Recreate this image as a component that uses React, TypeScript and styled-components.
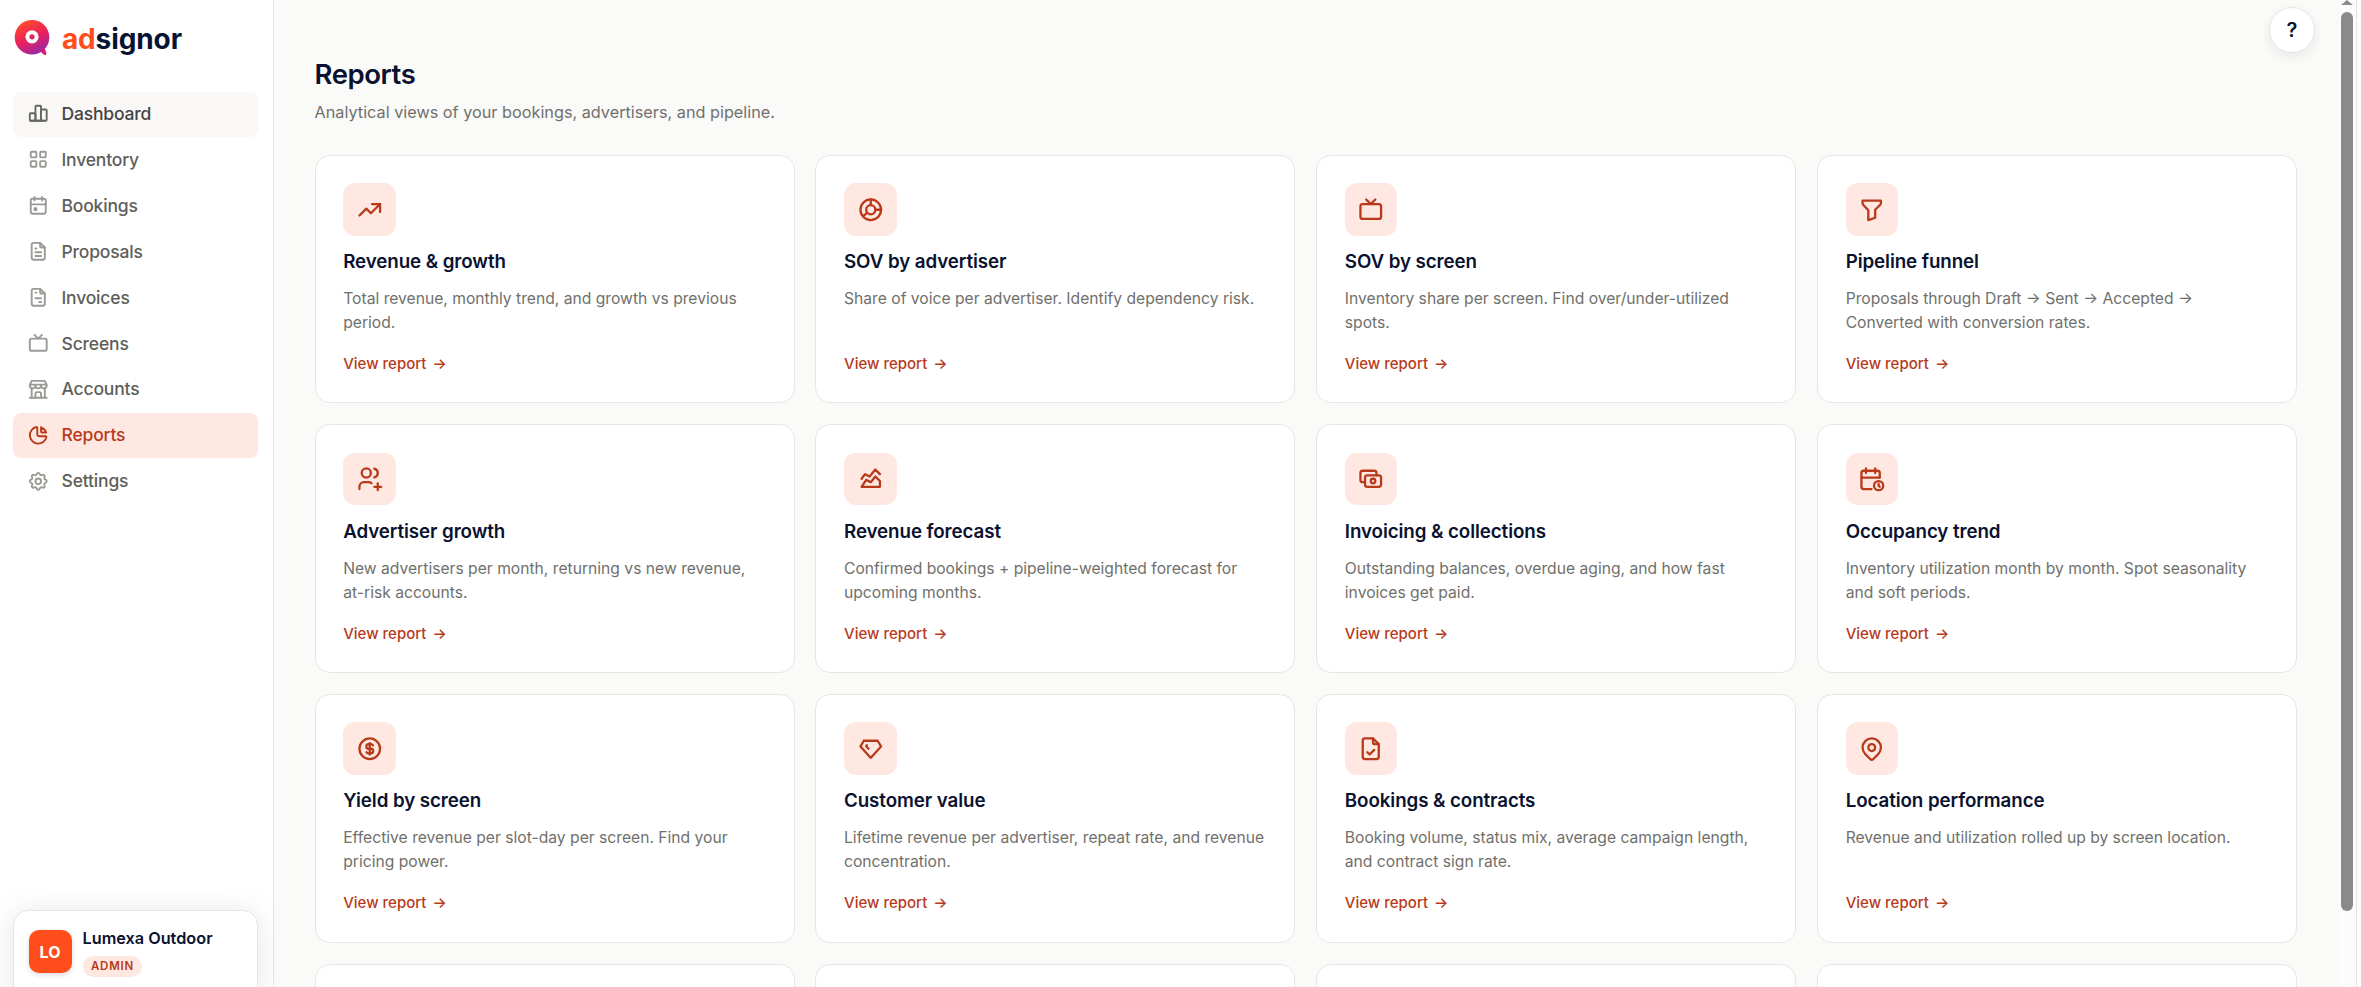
import React from 'react';
import styled, { createGlobalStyle, css } from 'styled-components';
import type { IconType } from 'react-icons';
import {
  TbBuildingStore, TbCalendarEvent, TbCalendarTime, TbCash, TbChartAreaLine, TbChartBar,
  TbChartDonut3, TbChartPie, TbCoin, TbDeviceTv, TbDiamond, TbFileCheck, TbFileInvoice,
  TbFileText, TbFilter, TbLayoutGrid, TbMapPin, TbSettings, TbTrendingUp, TbUsersPlus,
} from 'react-icons/tb';

const color = {
  ink: '#0a1230',
  muted: '#70706c',
  brand: '#ff4d1c',
  accent: '#b83a1b',
  tint: '#ffe8e1',
  line: '#e7e6e3',
  canvas: '#fafaf8',
};

const GlobalStyle = createGlobalStyle`
  *, *::before, *::after { box-sizing: border-box; }
  body {
    margin: 0;
    overflow: hidden;
    background: ${color.canvas};
    font-family: Inter, "Liberation Sans", sans-serif;
    color: ${color.ink};
  }
`;

const Shell = styled.div`
  display: flex;
  height: 987px;
  overflow: hidden;
`;

const Sidebar = styled.aside`
  display: flex;
  flex-direction: column;
  flex: none;
  width: 274px;
  padding: 0 15px 0 12.5px;
  background: #fff;
  border-right: 1px solid #e3e3e0;
  overflow: hidden;
`;

const Brand = styled.div`
  display: flex;
  align-items: center;
  gap: 11.4px;
  height: 77px;
  margin-bottom: 15px;
`;

const Wordmark = styled.span`
  font-size: 28px;
  font-weight: 700;
  line-height: 34px;
  letter-spacing: -0.1px;
  color: #071433;
  b { font-weight: 700; color: ${color.brand}; }
`;

const Nav = styled.nav`
  display: flex;
  flex-direction: column;
  gap: 0.92px;
`;

const NavItem = styled.a<{ $state?: 'hover' | 'active' }>`
  display: flex;
  align-items: center;
  gap: 12px;
  height: 45px;
  padding: 0 14.5px 2px;
  border-radius: 8px;
  font-size: 17.5px;
  font-weight: 500;
  letter-spacing: -0.01em;
  color: #5e5e5a;
  svg { flex: none; color: #999995; }
  ${({ $state }) => $state === 'hover' && css`
    background: #f9f8f6;
    color: #454544;
    svg { color: #666664; }
  `}
  ${({ $state }) => $state === 'active' && css`
    background: ${color.tint};
    color: ${color.accent};
    svg { color: ${color.accent}; }
  `}
`;

const Account = styled.div`
  display: flex;
  gap: 11px;
  flex: none;
  height: 92px;
  margin-top: auto;
  margin-bottom: -15px;
  padding: 19px 15px;
  background: #fff;
  border: 1px solid #e5e5e3;
  border-radius: 15px;
  box-shadow: 0 2px 30px rgba(20, 20, 40, 0.1);
`;

const Avatar = styled.div`
  display: grid;
  place-items: center;
  width: 43px;
  height: 43px;
  border-radius: 10px;
  background: ${color.brand};
  color: #fff;
  font-size: 16px;
  font-weight: 700;
  box-shadow: 0 2px 5px rgba(20, 20, 40, 0.15);
`;

const AccountText = styled.div`
  display: flex;
  flex-direction: column;
  align-items: flex-start;
  gap: 8px;
`;

const AccountName = styled.div`
  font-size: 16.25px;
  font-weight: 600;
  line-height: 20px;
  margin-top: -2px;
`;

const Role = styled.span`
  height: 21px;
  padding: 0 8.5px;
  border-radius: 11px;
  background: ${color.tint};
  color: ${color.accent};
  font-size: 11.5px;
  font-weight: 600;
  line-height: 21px;
  letter-spacing: 0.75px;
`;

const Main = styled.main`
  flex: 1;
  min-width: 0;
  padding: 57px 42px 0 40.5px;
  overflow: hidden;
`;

const Title = styled.h1`
  margin: 0 0 8px;
  font-size: 27.5px;
  font-weight: 600;
  line-height: 35px;
  letter-spacing: -0.015em;
`;

const Subtitle = styled.p`
  margin: 0 0 30.5px;
  font-size: 16.25px;
  line-height: 24px;
  color: ${color.muted};
`;

const Grid = styled.div`
  display: grid;
  grid-template-columns: repeat(4, 1fr);
  grid-auto-rows: 248.9px;
  gap: 20.8px;
`;

const Card = styled.article`
  display: flex;
  flex-direction: column;
  padding: 27.5px 27.5px 28.5px 27.7px;
  background: #fff;
  border: 1px solid ${color.line};
  border-radius: 15px;
`;

const Tile = styled.div`
  display: grid;
  place-items: center;
  flex: none;
  width: 52.5px;
  height: 52.5px;
  border-radius: 12px;
  background: ${color.tint};
  color: ${color.accent};
`;

const CardTitle = styled.h2`
  margin: 14.5px 0 13px;
  font-size: 18.75px;
  font-weight: 600;
  line-height: 24px;
  letter-spacing: -0.09px;
`;

const Description = styled.p`
  margin: 0;
  font-size: 15.66px;
  line-height: 24px;
  color: ${color.muted};
`;

const ViewLink = styled.a`
  display: flex;
  align-items: center;
  gap: 6px;
  margin-top: auto;
  font-size: 15px;
  font-weight: 500;
  line-height: 21px;
  color: ${color.accent};
`;

const HelpButton = styled.button`
  position: absolute;
  top: 7px;
  right: 46px;
  width: 46px;
  height: 46px;
  padding: 0;
  border: 1px solid ${color.line};
  border-radius: 50%;
  background: #fff;
  box-shadow: 0 4px 12px rgba(20, 20, 40, 0.07);
  color: ${color.ink};
  font: 600 20px Inter, sans-serif;
`;

const ScrollTrack = styled.div`
  display: flex;
  flex-direction: column;
  align-items: center;
  flex: none;
  width: 18px;
  padding-right: 1px;
  background: #fcfcfc;
  border-right: 1px solid #e2e2e2;
`;

const ScrollArrow = styled.div`
  width: 0;
  margin-bottom: 7px;
  border: 6px solid transparent;
  border-top: 0;
  border-bottom: 5px solid #8a8a8a;
`;

const ScrollThumb = styled.div`
  width: 12px;
  height: 899px;
  border-radius: 6px;
  background: #8a8a8a;
`;

const WindowEdge = styled.div`
  flex: none;
  width: 4px;
  background: #fdfdfd;
`;

const Logo = () => (
  <svg width="38" height="38" viewBox="0 0 38 38" fill="none">
    <defs>
      <linearGradient id="mark" x1="9" y1="2" x2="25" y2="36" gradientUnits="userSpaceOnUse">
        <stop stopColor="#ff4a2d" />
        <stop offset="0.5" stopColor="#ea1f5c" />
        <stop offset="1" stopColor="#8e2bb0" />
      </linearGradient>
    </defs>
    <circle cx="19" cy="17.3" r="17.3" fill="url(#mark)" />
    <path d="M26.6 30.4l4.8-1.6 1.4 1.6-.3 1.8 1.1-.3-.6 3.2-2.2-.3z" fill="#d81b74" />
    <circle cx="19" cy="16.8" r="6.6" fill="#fff" />
    <circle cx="19" cy="16.8" r="2.6" fill="#e0265f" />
  </svg>
);

const navItems: { label: string; icon: IconType; state?: 'hover' | 'active' }[] = [
  { label: 'Dashboard', icon: TbChartBar, state: 'hover' },
  { label: 'Inventory', icon: TbLayoutGrid },
  { label: 'Bookings', icon: TbCalendarEvent },
  { label: 'Proposals', icon: TbFileText },
  { label: 'Invoices', icon: TbFileInvoice },
  { label: 'Screens', icon: TbDeviceTv },
  { label: 'Accounts', icon: TbBuildingStore },
  { label: 'Reports', icon: TbChartPie, state: 'active' },
  { label: 'Settings', icon: TbSettings },
];

const reports: { title: string; text: string; icon: IconType }[] = [
  { icon: TbTrendingUp, title: 'Revenue & growth', text: 'Total revenue, monthly trend, and growth vs previous period.' },
  { icon: TbChartDonut3, title: 'SOV by advertiser', text: 'Share of voice per advertiser. Identify dependency risk.' },
  { icon: TbDeviceTv, title: 'SOV by screen', text: 'Inventory share per screen. Find over/under-utilized spots.' },
  { icon: TbFilter, title: 'Pipeline funnel', text: 'Proposals through Draft → Sent → Accepted → Converted with conversion rates.' },
  { icon: TbUsersPlus, title: 'Advertiser growth', text: 'New advertisers per month, returning vs new revenue, at-risk accounts.' },
  { icon: TbChartAreaLine, title: 'Revenue forecast', text: 'Confirmed bookings + pipeline-weighted forecast for upcoming months.' },
  { icon: TbCash, title: 'Invoicing & collections', text: 'Outstanding balances, overdue aging, and how fast invoices get paid.' },
  { icon: TbCalendarTime, title: 'Occupancy trend', text: 'Inventory utilization month by month. Spot seasonality and soft periods.' },
  { icon: TbCoin, title: 'Yield by screen', text: 'Effective revenue per slot-day per screen. Find your pricing power.' },
  { icon: TbDiamond, title: 'Customer value', text: 'Lifetime revenue per advertiser, repeat rate, and revenue concentration.' },
  { icon: TbFileCheck, title: 'Bookings & contracts', text: 'Booking volume, status mix, average campaign length, and contract sign rate.' },
  { icon: TbMapPin, title: 'Location performance', text: 'Revenue and utilization rolled up by screen location.' },
];

const nextRow = ['a', 'b', 'c', 'd'];

export default function App() {
  return (
    <>
      <GlobalStyle />
      <Shell>
        <Sidebar>
          <Brand>
            <Logo />
            <Wordmark><b>ad</b>signor</Wordmark>
          </Brand>
          <Nav>
            {navItems.map(({ label, icon: Icon, state }) => (
              <NavItem key={label} $state={state}>
                <Icon size={22.5} />
                {label}
              </NavItem>
            ))}
          </Nav>
          <Account>
            <Avatar>LO</Avatar>
            <AccountText>
              <AccountName>Lumexa Outdoor</AccountName>
              <Role>ADMIN</Role>
            </AccountText>
          </Account>
        </Sidebar>
        <Main>
          <Title>Reports</Title>
          <Subtitle>Analytical views of your bookings, advertisers, and pipeline.</Subtitle>
          <Grid>
            {reports.map(({ title, text, icon: Icon }) => (
              <Card key={title}>
                <Tile><Icon size={27.5} /></Tile>
                <CardTitle>{title}</CardTitle>
                <Description>{text}</Description>
                <ViewLink>View report <span>→</span></ViewLink>
              </Card>
            ))}
            {nextRow.map((id) => <Card key={id} />)}
          </Grid>
        </Main>
        <ScrollTrack>
          <ScrollArrow />
          <ScrollThumb />
        </ScrollTrack>
        <WindowEdge />
        <HelpButton>?</HelpButton>
      </Shell>
    </>
  );
}
